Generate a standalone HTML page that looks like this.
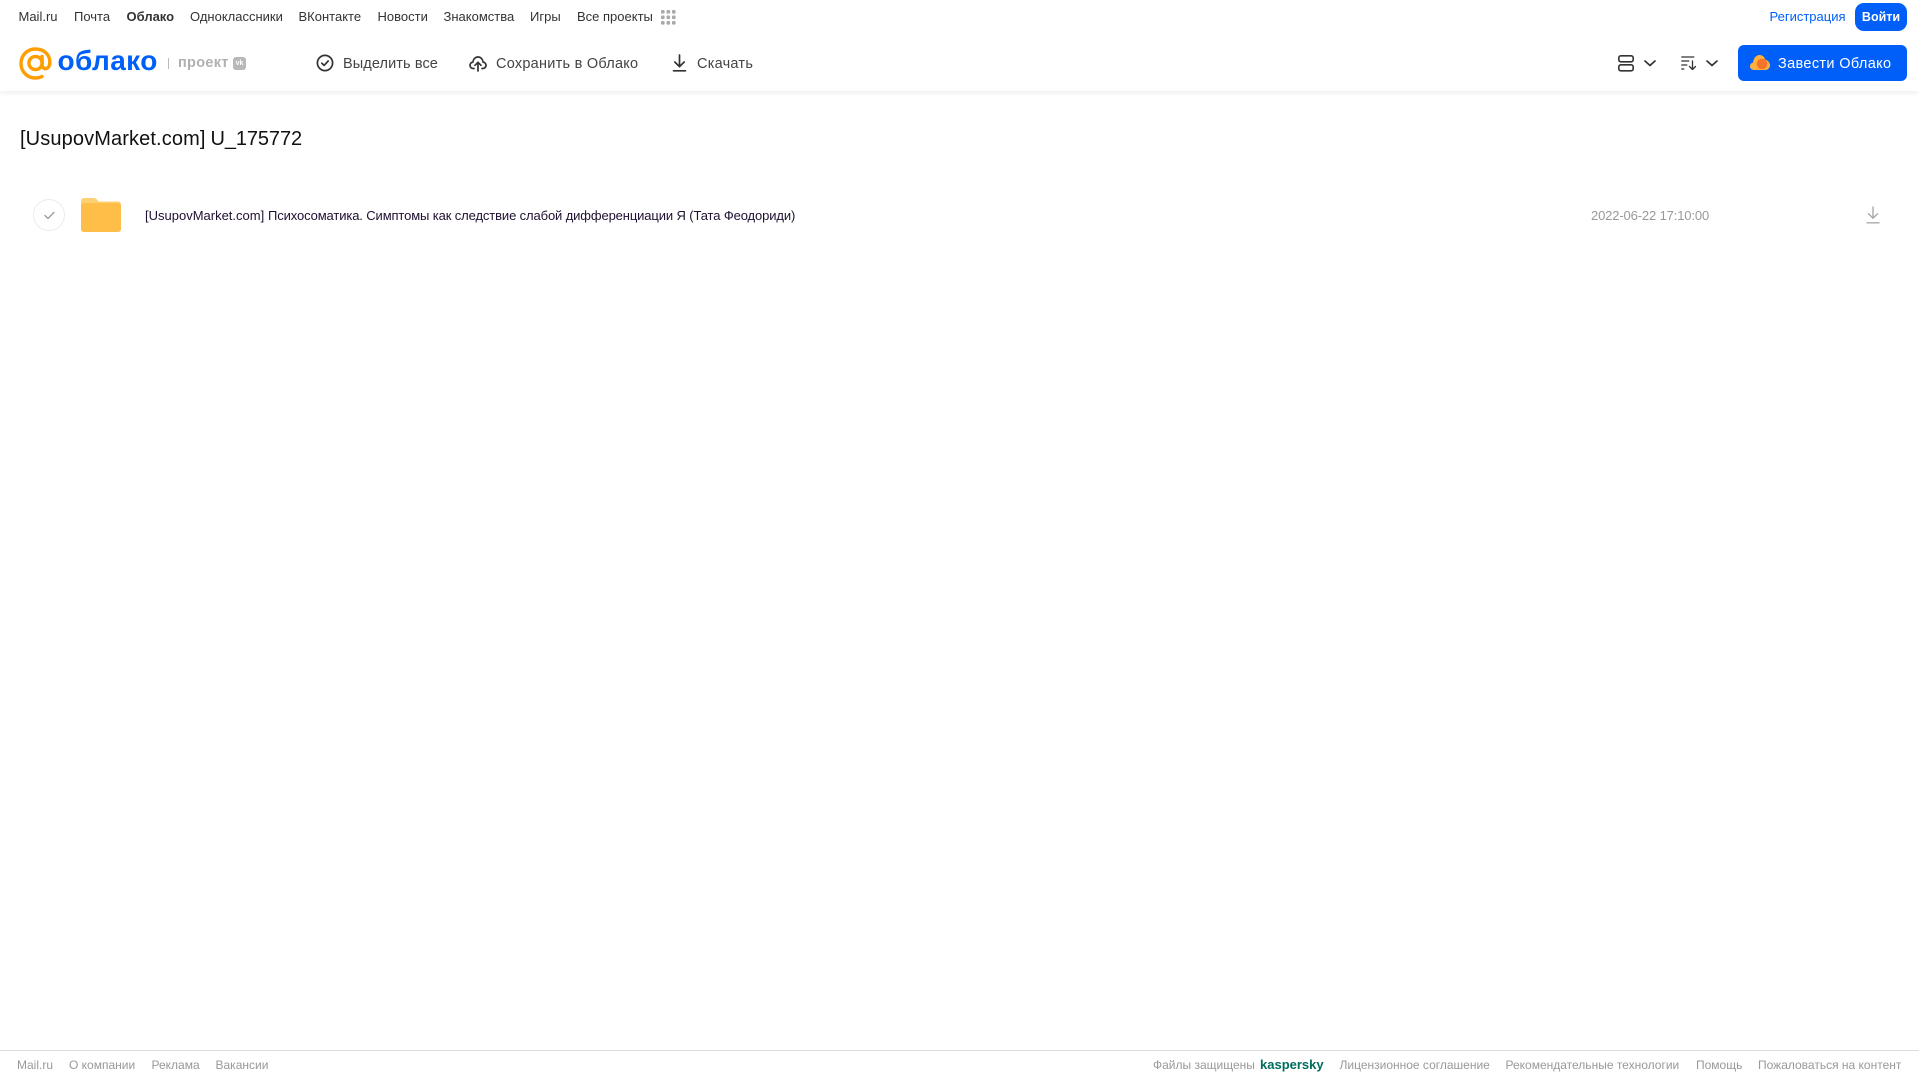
<!DOCTYPE html>
<html lang="ru"><head><meta charset="utf-8"><title>Облако</title>
<style>
html,body{margin:0;padding:0;width:1919px;height:1079px;overflow:hidden;background:#fff}
body{position:relative;font-family:"Liberation Sans",Arial,sans-serif;color:#333}
.t{position:absolute;white-space:nowrap;line-height:20px;height:20px}
.n{top:6.5px;font-size:13px;color:#333}
.b{top:53.5px;font-size:14.5px;color:#444;letter-spacing:.25px}
.f{top:1055px;font-size:12px;color:#999}
svg{position:absolute;overflow:visible}
.hdr{position:absolute;left:0;top:0;width:1919px;height:91px;background:#fff;box-shadow:0 1px 6px rgba(0,0,0,.09)}
.btn{position:absolute;background:#005ff9}
</style></head><body>
<div class="hdr"></div>
<div class="t n" style="left:18.5px">Mail.ru</div>
<div class="t n" style="left:74px">Почта</div>
<div class="t n" style="left:126.5px;font-weight:bold">Облако</div>
<div class="t n" style="left:190px">Одноклассники</div>
<div class="t n" style="left:298.5px">ВКонтакте</div>
<div class="t n" style="left:377.5px">Новости</div>
<div class="t n" style="left:443.5px">Знакомства</div>
<div class="t n" style="left:530px">Игры</div>
<div class="t n" style="left:577px">Все проекты</div>
<svg style="left:661px;top:10px" width="15" height="15" fill="#aaa"><rect width="3.6" height="3.6" rx="1"/><rect x="5.5" width="3.6" height="3.6" rx="1"/><rect x="11" width="3.6" height="3.6" rx="1"/><rect y="5.5" width="3.6" height="3.6" rx="1"/><rect x="5.5" y="5.5" width="3.6" height="3.6" rx="1"/><rect x="11" y="5.5" width="3.6" height="3.6" rx="1"/><rect y="11" width="3.6" height="3.6" rx="1"/><rect x="5.5" y="11" width="3.6" height="3.6" rx="1"/><rect x="11" y="11" width="3.6" height="3.6" rx="1"/></svg>

<svg style="left:19px;top:47px" width="33" height="33" viewBox="0 0 33 33" fill="none" stroke="#ff9e00" stroke-width="3.4"><circle cx="16.5" cy="16" r="6.6"/><path d="M23.1 9.5V18c0 5 6.8 5 7.6-1 1-8-4.500-15-14.200-15C8 2 2 8.500 2 16.500S8 31 16.500 31c2.500 0 4.500-.5 6.500-1.500" stroke-linecap="round"/></svg>
<div class="t" style="left:57.5px;top:49px;font-size:28px;line-height:24px;height:24px;color:#005ff9;font-weight:bold;letter-spacing:.4px">облако</div>
<div style="position:absolute;left:168px;top:58px;width:1px;height:11px;background:#bbb"></div>
<div class="t" style="left:178px;top:52.500px;font-size:14.500px;color:#b0b0b0;font-weight:bold;letter-spacing:.3px">проект</div>
<div style="position:absolute;left:233px;top:57px;width:13px;height:13px;border-radius:3px;background:#b8b8b8;color:#fff;font-size:7px;font-weight:bold;line-height:13px;text-align:center">vk</div>

<svg style="left:316px;top:54px" width="18" height="18" viewBox="0 0 18 18" fill="none" stroke="#333" stroke-width="1.700" stroke-linecap="round" stroke-linejoin="round"><circle cx="9" cy="9" r="7.600"/><path d="M5.800 9.200l2.300 2.200 4.100-4.400"/></svg>
<div class="t b" style="left:343px;letter-spacing:.1px">Выделить все</div>
<svg style="left:469px;top:54px" width="18" height="18" viewBox="0 0 18 18" fill="none" stroke="#333" stroke-width="1.700" stroke-linecap="round" stroke-linejoin="round"><path d="M5 14.500H4.200C2.300 14.500 1 13 1 11.300c0-1.700 1.200-3 2.900-3.200C4.200 5.200 6.300 3 9 3s4.800 2.200 5.100 5.100c1.700.2 2.900 1.500 2.900 3.200 0 1.700-1.300 3.200-3.200 3.200H13"/><path d="M9 17V8.500M6 11.300l3-3 3 3"/></svg>
<div class="t b" style="left:496px">Сохранить в Облако</div>
<svg style="left:672px;top:54px" width="15" height="18" viewBox="0 0 15 18" fill="none" stroke="#333" stroke-width="1.700" stroke-linecap="round" stroke-linejoin="round"><path d="M7.500 1v11.500M2.800 8l4.700 4.700L12.200 8M1.500 16.800h12"/></svg>
<div class="t b" style="left:697px">Скачать</div>

<svg style="left:1618px;top:55px" width="16" height="17" viewBox="0 0 16 17" fill="none" stroke="#333" stroke-width="1.600"><rect x=".8" y=".8" width="14.400" height="6" rx="2"/><rect x=".8" y="9.800" width="14.400" height="6" rx="2"/></svg>
<svg style="left:1644px;top:60px" width="12" height="7" viewBox="0 0 12 7" fill="none" stroke="#333" stroke-width="1.700" stroke-linecap="round" stroke-linejoin="round"><path d="M1 1l5 4.500L11 1"/></svg>
<svg style="left:1681px;top:55px" width="16" height="16" viewBox="0 0 16 16" fill="none" stroke="#333" stroke-width="1.300" stroke-linecap="round" stroke-linejoin="round"><path d="M.8 2h12M.8 6h7M.8 10h5M.8 14h2M11.500 6v8.500M8.500 11.500l3 3 3-3"/></svg>
<svg style="left:1706px;top:60px" width="12" height="7" viewBox="0 0 12 7" fill="none" stroke="#333" stroke-width="1.700" stroke-linecap="round" stroke-linejoin="round"><path d="M1 1l5 4.500L11 1"/></svg>

<div class="t" style="left:1769.500px;top:6.500px;font-size:13px;color:#005ff9">Регистрация</div>
<div class="btn" style="left:1855px;top:3px;width:52px;height:28px;border-radius:9px;color:#fff;font-size:12.500px;font-weight:bold;line-height:28px;text-align:center">Войти</div>
<div class="btn" style="left:1738px;top:45px;width:169px;height:36px;border-radius:6px"></div>
<svg style="left:1750px;top:54px" width="20" height="18" viewBox="0 0 20 18"><path d="M4 16C1.500 16 0 14.300 0 12.300 0 10.400 1.300 8.900 3 8.600 3.500 4.500 6 1 9.500 1c3 0 5 2 5.800 4.800C17.800 6.300 20 8.500 20 11.300c0 2.700-2 4.700-4.800 4.700z" fill="#ffb13d"/><circle cx="12" cy="10" r="5.300" fill="#f5742a"/></svg>
<div class="t" style="left:1778px;top:53.500px;font-size:14.500px;color:#fff;letter-spacing:.35px">Завести Облако</div>

<div class="t" style="left:20px;top:128.500px;font-size:20px;letter-spacing:.12px;color:#111">[UsupovMarket.com]</div>
<div class="t" style="left:210.500px;top:128.500px;font-size:20px;letter-spacing:-.1px;color:#111">U_175772</div>

<div style="position:absolute;left:33px;top:199px;width:30px;height:30px;border:1px solid #ececec;border-radius:50%"></div>
<svg style="left:44px;top:211px" width="11" height="9" viewBox="0 0 11 9" fill="none" stroke="#999" stroke-width="1.300" stroke-linecap="round" stroke-linejoin="round"><path d="M1 4.500l3 3L10 1.300"/></svg>
<svg style="left:81px;top:198px" width="40" height="34" viewBox="0 0 40 34"><path d="M0 3a3 3 0 0 1 3-3h9.500c2 0 3 1 4 2.200l1 1.300H37a3 3 0 0 1 3 3V31a3 3 0 0 1-3 3H3a3 3 0 0 1-3-3z" fill="#ffd071"/><path d="M0 8a3 3 0 0 1 3-3h34a3 3 0 0 1 3 3v23a3 3 0 0 1-3 3H3a3 3 0 0 1-3-3z" fill="#ffbe48"/></svg>
<div class="t" style="left:145px;top:205.500px;font-size:13px;color:#1e1030">[UsupovMarket.com]</div>
<div class="t" style="left:268px;top:205.500px;font-size:13px;letter-spacing:-.12px;color:#1e1030">Психосоматика. Симптомы как следствие слабой дифференциации Я (Тата Феодориди)</div>
<div class="t" style="left:1591px;top:205.500px;font-size:13px;letter-spacing:-.14px;color:#999">2022-06-22 17:10:00</div>
<svg style="left:1866px;top:206px" width="14" height="18" viewBox="0 0 14 18" fill="none" stroke="#aaa" stroke-width="1.400" stroke-linecap="round" stroke-linejoin="round"><path d="M7 1v11M2.500 7.800L7 12.300l4.500-4.500M1 16.800h12"/></svg>

<div style="position:absolute;left:0;top:1050px;width:1919px;height:1px;background:#ddd"></div>
<div class="t f" style="left:17px">Mail.ru</div>
<div class="t f" style="left:69px">О компании</div>
<div class="t f" style="left:151.500px">Реклама</div>
<div class="t f" style="left:215.500px">Вакансии</div>
<div class="t f" style="left:1153px">Файлы защищены</div>
<div class="t" style="left:1260px;top:1055px;font-size:13px;font-weight:bold;color:#006d5c">kaspersky</div>
<div class="t f" style="left:1339.500px">Лицензионное соглашение</div>
<div class="t f" style="left:1505.500px">Рекомендательные технологии</div>
<div class="t f" style="left:1696px">Помощь</div>
<div class="t f" style="left:1758px">Пожаловаться на контент</div>
</body></html>
